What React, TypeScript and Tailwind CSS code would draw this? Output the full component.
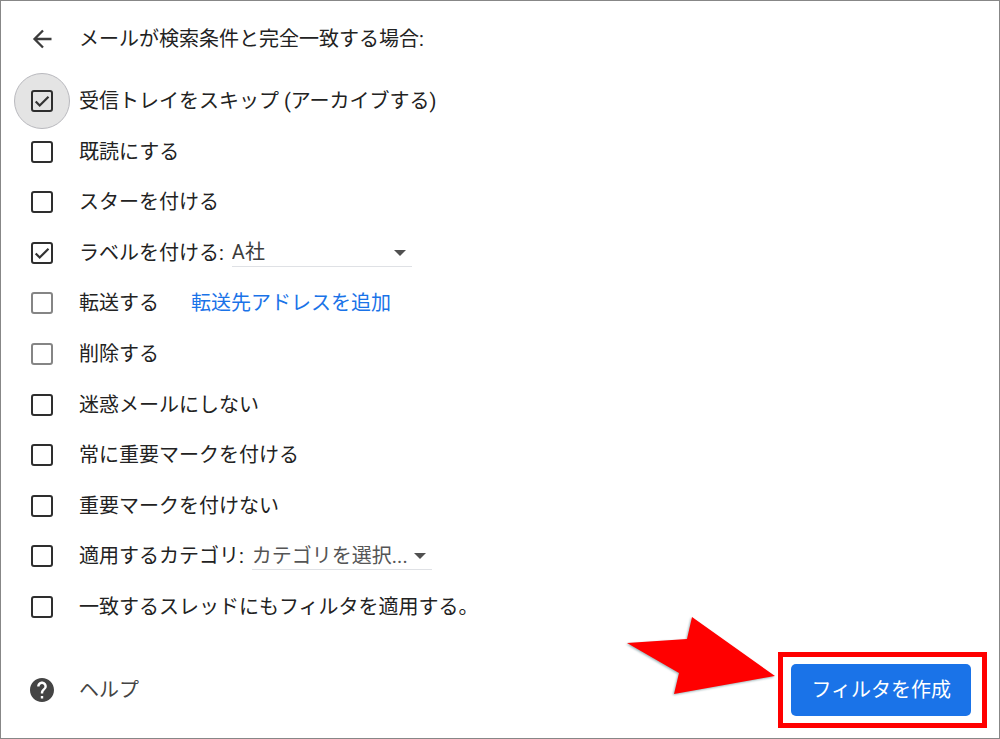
import { useState } from "react";
import type { ReactNode } from "react";

type Option = {
  id: string;
  label: string;
  disabled?: boolean;
  halo?: boolean;
  extra?: ReactNode;
};

function Select({ label, options, tone }: { label: string; options: string[]; tone: string }) {
  return (
    <span className="relative ml-2 inline-flex w-[180px] items-center">
      <select
        aria-label={label}
        className={`h-7 w-full cursor-pointer appearance-none border-b border-[#dfe1e5] bg-transparent pr-5 leading-6 outline-none ${tone}`}
      >
        {options.map((option) => (
          <option key={option}>{option}</option>
        ))}
      </select>
      <svg viewBox="0 0 12 6" className="pointer-events-none absolute right-1.5 h-1.5 w-3" aria-hidden="true">
        <path d="M0 0h12L6 6z" fill="#505050" />
      </svg>
    </span>
  );
}

const options: Option[] = [
  { id: "skip", label: "受信トレイをスキップ (アーカイブする)", halo: true },
  { id: "read", label: "既読にする" },
  { id: "star", label: "スターを付ける" },
  {
    id: "label",
    label: "ラベルを付ける:",
    extra: <Select label="ラベル" options={["A社"]} tone="text-[#3c3c3c]" />,
  },
  {
    id: "forward",
    label: "転送する",
    disabled: true,
    extra: (
      <a href="#forwarding" className="ml-8 text-[#1a73e8]">
        転送先アドレスを追加
      </a>
    ),
  },
  { id: "delete", label: "削除する", disabled: true },
  { id: "spam", label: "迷惑メールにしない" },
  { id: "important", label: "常に重要マークを付ける" },
  { id: "unimportant", label: "重要マークを付けない" },
  {
    id: "category",
    label: "適用するカテゴリ:",
    extra: <Select label="カテゴリ" options={["カテゴリを選択..."]} tone="text-[#555555]" />,
  },
  { id: "threads", label: "一致するスレッドにもフィルタを適用する。" },
];

export default function App() {
  const [checked, setChecked] = useState<Record<string, boolean>>({ skip: true, label: true });

  return (
    <main className="flex min-h-screen flex-col border border-[#878787] bg-white font-[Roboto,'Noto_Sans_CJK_JP',sans-serif] text-xl leading-7 text-[#222222]">
      <header className="flex h-[75px] items-center pl-[13px]">
        <button type="button" aria-label="戻る" className="mr-[9px] flex w-14 justify-center">
          <svg viewBox="0 0 20 20" className="size-5" fill="none" stroke="#3c3c3c" strokeWidth="2.3" aria-hidden="true">
            <path d="M19.5 10H2.8M11 1.5L2.5 10l8.5 8.5" />
          </svg>
        </button>
        <h1>メールが検索条件と完全一致する場合:</h1>
      </header>

      <ul className="grid flex-1 auto-rows-fr pl-[13px]">
        {options.map((option) => (
          <li key={option.id} className="flex items-center">
            <span className="relative mr-[9px] flex w-14 items-center justify-center">
              {option.halo && (
                <span className="absolute size-14 rounded-full border border-[#b9b9be] bg-[#e4e4e4]" />
              )}
              <input
                id={option.id}
                type="checkbox"
                disabled={option.disabled}
                checked={!!checked[option.id]}
                onChange={(event) => setChecked({ ...checked, [option.id]: event.target.checked })}
                className="relative size-[22px] appearance-none rounded-[3px] border-2 border-[#2e2e2e] disabled:border-[#858585]"
              />
              {checked[option.id] && (
                <svg
                  viewBox="0 0 22 22"
                  className="pointer-events-none absolute size-[22px]"
                  fill="none"
                  stroke="#333333"
                  strokeWidth="2.2"
                  aria-hidden="true"
                >
                  <path d="M4.7 11.5l4 4L17.5 6.7" />
                </svg>
              )}
            </span>
            <label htmlFor={option.id}>{option.label}</label>
            {option.extra}
          </li>
        ))}
      </ul>

      <footer className="flex items-center justify-between pt-5 pr-3 pb-2.5 pl-[13px]">
        <a href="#help" className="flex items-center text-[#444444]">
          <span className="mr-[9px] flex w-14 justify-center">
            <svg viewBox="2 2 20 20" className="size-6" aria-hidden="true">
              <path
                fill="#444444"
                d="M12 2C6.48 2 2 6.48 2 12s4.48 10 10 10 10-4.48 10-10S17.52 2 12 2zm1 17h-2v-2h2v2zm2.07-7.75l-.9.92C13.45 12.9 13 13.5 13 15h-2v-.5c0-1.1.45-2.1 1.17-2.83l1.24-1.26c.37-.36.59-.86.59-1.41 0-1.1-.9-2-2-2s-2 .9-2 2H8c0-2.21 1.79-4 4-4s4 1.79 4 4c0 .88-.36 1.68-.93 2.25z"
              />
            </svg>
          </span>
          ヘルプ
        </a>
        <div className="relative border-[5px] border-[#ff0000] py-[7px] pr-[11px] pl-2">
          <svg
            viewBox="0 0 150 80"
            className="absolute right-full bottom-[27px] mr-2 h-20 w-[150px] overflow-visible drop-shadow-[-1px_1px_1px_rgba(0,60,70,0.4)]"
            aria-hidden="true"
          >
            <path d="M2 27L62 23 67 1 150 60 49 78 54 57z" fill="#ff0000" />
          </svg>
          <button type="button" className="h-[52px] rounded-[5px] bg-[#1a73e8] px-5 text-white">
            フィルタを作成
          </button>
        </div>
      </footer>
    </main>
  );
}
